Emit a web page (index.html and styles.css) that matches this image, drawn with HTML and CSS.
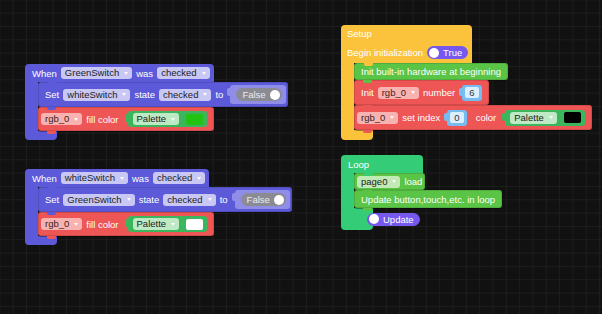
FILE: index.html
```html
<!DOCTYPE html>
<html>
<head>
<meta charset="utf-8">
<title>Blocks</title>
<link rel="stylesheet" href="styles.css">
</head>
<body>
<div class="ws">

  <div class="cb purple g1">
    <div class="head bump">When <span class="dd dd-p">GreenSwitch<i></i></span> was <span class="dd dd-p">checked<i></i></span></div>
    <div class="mid">
      <div class="arm"></div>
      <div class="stack">
        <div class="blk purple bump h25 pr2">Set <span class="dd dd-p">whiteSwitch<i></i></span> state <span class="dd dd-p">checked<i></i></span> to <span class="sock tsock"><span class="tg tg-off">False<b></b></span></span></div>
        <div class="blk red bump h24 pl4"><span class="dd dd-r">rgb_0<i></i></span> fill color <span class="sock pal"><span class="dd dd-g">Palette<i></i></span><span class="sw sw-green"></span></span></div>
      </div>
    </div>
    <div class="foot"></div>
  </div>

  <div class="cb purple g2">
    <div class="head bump">When <span class="dd dd-p">whiteSwitch<i></i></span> was <span class="dd dd-p">checked<i></i></span></div>
    <div class="mid">
      <div class="arm"></div>
      <div class="stack">
        <div class="blk purple bump h25 pr2">Set <span class="dd dd-p">GreenSwitch<i></i></span> state <span class="dd dd-p">checked<i></i></span> to <span class="sock tsock"><span class="tg tg-off">False<b></b></span></span></div>
        <div class="blk red bump h24 pl4"><span class="dd dd-r">rgb_0<i></i></span> fill color <span class="sock pal"><span class="dd dd-g">Palette<i></i></span><span class="sw sw-white"></span></span></div>
      </div>
    </div>
    <div class="foot"></div>
  </div>

  <div class="cb yellow g3">
    <div class="head col bump w131">
      <div class="ln">Setup</div>
      <div class="ln ln2">Begin initialization <span class="tg tg-on"><b></b>True</span></div>
    </div>
    <div class="mid">
      <div class="arm"></div>
      <div class="stack">
        <div class="blk green bump h17">Init built-in hardware at beginning</div>
        <div class="blk red bump h25">Init <span class="dd dd-r">rgb_0<i></i></span> number <span class="sock num"><span>6</span></span></div>
        <div class="blk red bump h25 pl4"><span class="dd dd-r">rgb_0<i></i></span> set index <span class="sock num"><span>0</span></span> <span class="sp">color</span> <span class="sock pal"><span class="dd dd-g">Palette<i></i></span><span class="sw sw-black"></span></span></div>
      </div>
    </div>
    <div class="foot w131 f10"></div>
  </div>

  <div class="cb loop g4">
    <div class="head bump w82">Loop</div>
    <div class="mid">
      <div class="arm"></div>
      <div class="stack">
        <div class="blk green bump h17 pl4 pr3"><span class="dd dd-lg">page0<i></i></span> load</div>
        <div class="blk green bump h18">Update button,touch,etc. in loop</div>
      </div>
    </div>
    <div class="foot w82 loopfoot"><span class="tg tg-on"><b></b>Update</span></div>
  </div>

</div>
</body>
</html>
```

FILE: styles.css
```css
html, body {
  margin: 0;
  padding: 0;
}

body {
  width: 602px;
  height: 314px;
  overflow: hidden;
  background: #111111;
  font-family: "Liberation Sans", Arial, sans-serif;
  font-size: 9.5px;
}

.ws {
  position: relative;
  width: 602px;
  height: 314px;
  background-color: #111111;
  background-image:
    linear-gradient(to right, #1d1d1d 1px, transparent 1px),
    linear-gradient(to bottom, #1d1d1d 1px, transparent 1px);
  background-size: 13.33px 13.33px;
  background-position: 12.7px 12.7px;
}

/* colours */
.purple { --c: #5c5ad8; }
.red { --c: #ee5555; }
.yellow { --c: #fbc33c; }
.green { --c: #5ac446; }
.loop { --c: #35cc78; }

/* block groups on the canvas */
.cb {
  position: absolute;
  display: flex;
  flex-direction: column;
  align-items: flex-start;
}

.g1 { left: 25px; top: 64px; }
.g2 { left: 25px; top: 169px; }
.g3 { left: 341px; top: 25px; }
.g4 { left: 341px; top: 155px; }

.head {
  position: relative;
  display: flex;
  align-items: center;
  gap: 4px;
  height: 18px;
  padding: 0 4px 0 7px;
  box-sizing: border-box;
  background: var(--c);
  border-radius: 4px 4px 0 0;
  color: #fff;
  white-space: nowrap;
}

.head.col {
  flex-direction: column;
  align-items: flex-start;
  gap: 0;
  height: 38px;
  padding: 0 4px 0 6px;
}

.ln {
  display: flex;
  align-items: center;
  height: 17px;
  gap: 4px;
  white-space: nowrap;
}

.ln2 {
  height: 21px;
}

.w131 { width: 131px; }
.w82 { width: 82px; }

.mid {
  display: flex;
}

.arm {
  width: 13px;
  background: var(--c);
}

.stack {
  display: flex;
  flex-direction: column;
  align-items: flex-start;
}

.foot {
  width: 32px;
  height: 9px;
  background: var(--c);
  border-radius: 0 0 4px 4px;
}

.f10 { height: 10px; }

.loopfoot {
  height: 22px;
  display: flex;
  align-items: center;
  padding-left: 26px;
  box-sizing: border-box;
}

.blk {
  position: relative;
  display: flex;
  align-items: center;
  gap: 4px;
  padding: 0 7px;
  box-sizing: border-box;
  background: var(--c);
  color: #fff;
  border-radius: 3px;
  box-shadow: inset 0 0 0 1px rgba(0, 0, 0, 0.12), 0 1px 0 rgba(0, 0, 0, 0.35);
  white-space: nowrap;
}

.h17 { height: 17px; }
.h18 { height: 18px; }
.h24 { height: 24px; }
.h25 { height: 25px; }
.pl4 { padding-left: 3px; }
.pr2 { padding-right: 2px; }
.pr3 { padding-right: 3px; }

.sp { margin-left: 5px; }

/* previous/next connection bumps */
.bump::after {
  content: "";
  position: absolute;
  left: 9px;
  bottom: -3px;
  width: 9px;
  height: 3px;
  background: var(--c);
  border-radius: 0 0 2px 2px;
  z-index: 2;
}

.head.bump::after {
  left: 23px;
}

/* dropdown fields */
.dd {
  display: inline-flex;
  align-items: center;
  gap: 5px;
  height: 12px;
  padding: 0 4px 0 4px;
  border-radius: 3px;
  color: #222;
  line-height: 12px;
}

.dd i {
  width: 0;
  height: 0;
  border-left: 2.5px solid transparent;
  border-right: 2.5px solid transparent;
  border-top: 3px solid rgba(255, 255, 255, 0.9);
}

.dd-p { background: #c9c8f4; }
.dd-r { background: #f8b3b1; color: #3a2222; }
.dd-g { background: #bde9c4; }
.dd-lg { background: #c2eab4; }

/* value sockets */
.sock {
  position: relative;
  display: inline-flex;
  align-items: center;
  margin-left: 3px;
  border-radius: 3px;
  background: var(--s);
}

.sock::before {
  content: "";
  position: absolute;
  left: -3px;
  top: 3px;
  width: 3px;
  height: 8px;
  background: var(--s);
  border-radius: 2px 0 0 2px;
}

.pal {
  --s: #3cb65c;
  height: 16px;
  margin-left: 5px;
  padding: 0 4px 0 5px;
  gap: 7px;
  box-sizing: border-box;
}

.tsock {
  --s: #8f8de8;
  padding: 3px 4px 3px 6px;
}

.num {
  --s: #76bcf1;
  height: 16px;
  padding: 0 3px;
  box-sizing: border-box;
}

.num span {
  display: inline-block;
  background: #dcefff;
  color: #333;
  height: 11px;
  line-height: 11px;
  padding: 0 4px;
  border-radius: 2px;
}

.sw {
  width: 17px;
  height: 11px;
  border-radius: 2px;
}

.sw-green { background: #22c212; }
.sw-white { background: #ffffff; }
.sw-black { background: #000000; }

/* toggles */
.tg {
  display: inline-flex;
  align-items: center;
  gap: 4px;
  height: 13px;
  border-radius: 7px;
  color: #fff;
}

.tg b {
  width: 10px;
  height: 10px;
  border-radius: 50%;
  background: #fff;
}

.tg-off {
  background: #8b8b94;
  color: #ececec;
  padding: 0 2px 0 6px;
}

.tg-on {
  background: #7658ee;
  padding: 0 6px 0 2px;
}
```
